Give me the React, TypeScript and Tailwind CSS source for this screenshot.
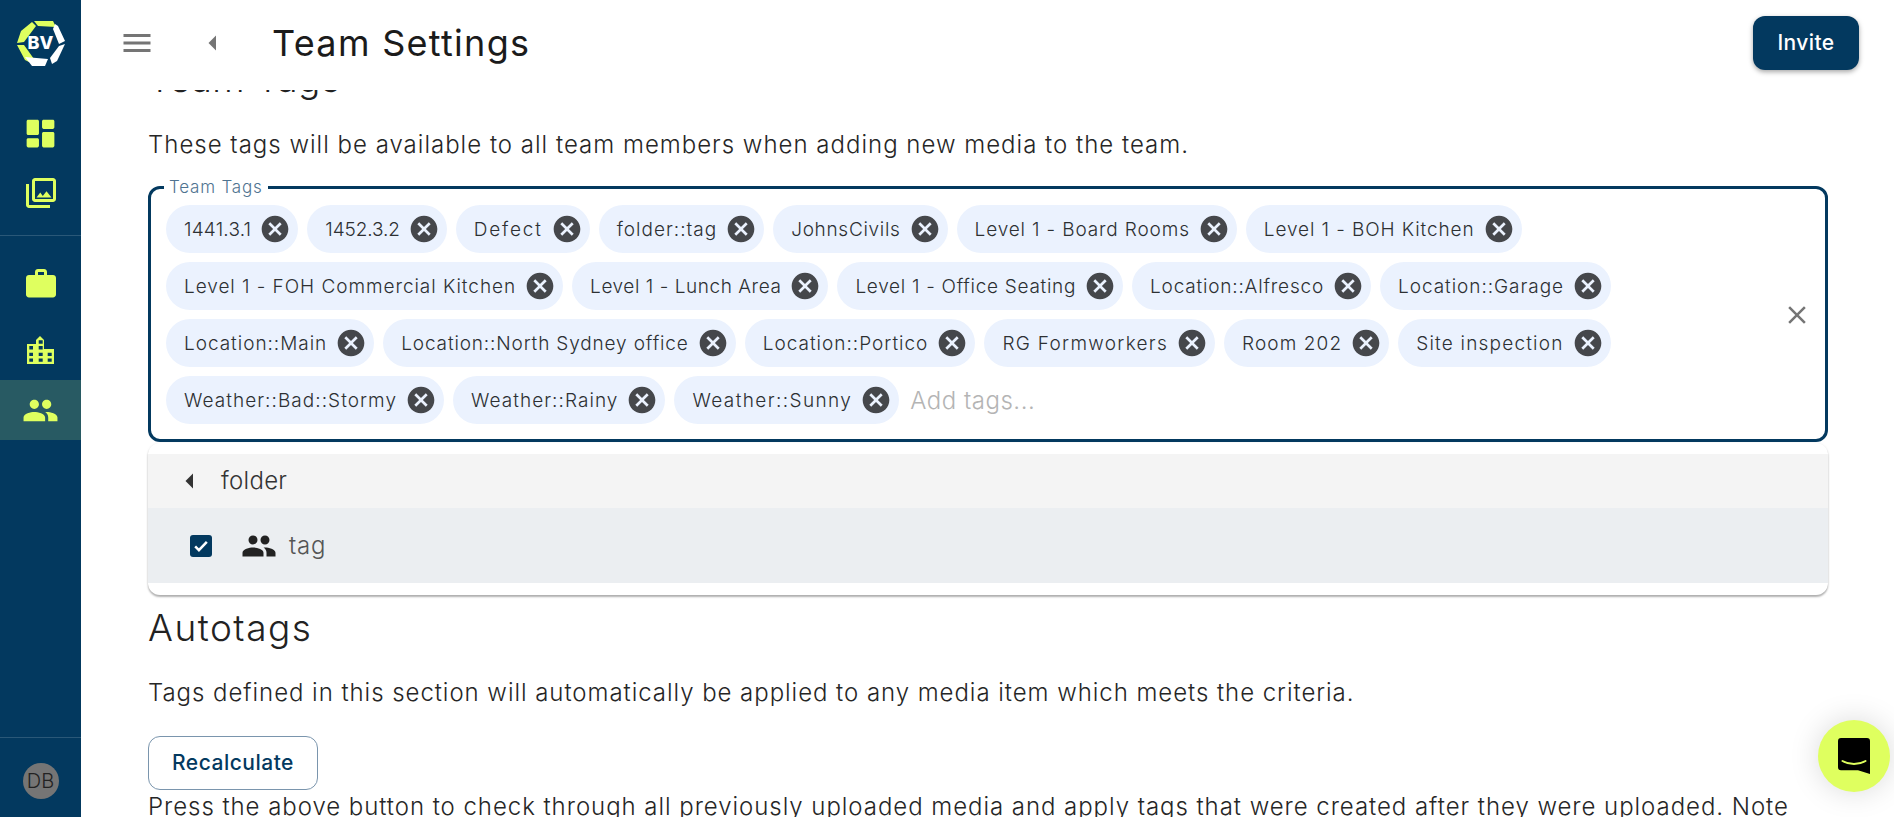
import { ReactNode } from 'react';

const mont = '[font-family:Inter,"Noto_Sans",sans-serif]';

// label + letter spacing per chip, so chip widths line up with the wider original typeface
const tagRows: [string, string][][] = [
  [
    ['1441.3.1', 'tracking-[0.2px]'],
    ['1452.3.2', 'tracking-[-0.1px]'],
    ['Defect', 'tracking-[1.8px]'],
    ['folder::tag', 'tracking-[1px]'],
    ['JohnsCivils', 'tracking-[0.7px]'],
    ['Level 1 - Board Rooms', 'tracking-[0.85px]'],
    ['Level 1 - BOH Kitchen', 'tracking-[0.9px]'],
  ],
  [
    ['Level 1 - FOH Commercial Kitchen', 'tracking-[0.95px]'],
    ['Level 1 - Lunch Area', 'tracking-[0.55px]'],
    ['Level 1 - Office Seating', 'tracking-[0.7px]'],
    ['Location::Alfresco', 'tracking-[0.8px]'],
    ['Location::Garage', 'tracking-[0.95px]'],
  ],
  [
    ['Location::Main', 'tracking-[0.97px]'],
    ['Location::North Sydney office', 'tracking-[0.85px]'],
    ['Location::Portico', 'tracking-[1px]'],
    ['RG Formworkers', 'tracking-[1.3px]'],
    ['Room 202', 'tracking-[1.1px]'],
    ['Site inspection', 'tracking-[1.2px]'],
  ],
  [
    ['Weather::Bad::Stormy', 'tracking-[1.05px]'],
    ['Weather::Rainy', 'tracking-[1.05px]'],
    ['Weather::Sunny', 'tracking-[1.4px]'],
  ],
];

function Icon({ d, className }: { d: string; className?: string }) {
  return (
    <svg viewBox="0 0 24 24" fill="currentColor" className={`shrink-0 ${className ?? ''}`}>
      <path d={d} />
    </svg>
  );
}

const PEOPLE =
  'M16 11c1.66 0 2.99-1.34 2.99-3S17.66 5 16 5c-1.66 0-3 1.34-3 3s1.34 3 3 3zm-8 0c1.66 0 2.99-1.34 2.99-3S9.66 5 8 5C6.34 5 5 6.34 5 8s1.34 3 3 3zm0 2c-2.33 0-7 1.17-7 3.5V19h14v-2.5c0-2.33-4.67-3.5-7-3.5zm8 0c-.29 0-.62.02-.97.05 1.16.84 1.97 1.97 1.97 3.45V19h6v-2.5c0-2.33-4.67-3.5-7-3.5z';
const CANCEL =
  'M12 2C6.47 2 2 6.47 2 12s4.47 10 10 10 10-4.47 10-10S17.53 2 12 2zm5 13.59L15.59 17 12 13.41 8.41 17 7 15.59 10.59 12 7 8.41 8.41 7 12 10.59 15.59 7 17 8.41 13.41 12 17 15.59z';
const ARROW_LEFT = 'M14 7l-5 5 5 5V7z';

function NavItem({ children, active }: { children: ReactNode; active?: boolean }) {
  return (
    <div className={`flex h-[60px] items-center justify-center text-[#dfff5f] ${active ? 'bg-[#285a63]' : ''}`}>
      {children}
    </div>
  );
}

function Logo() {
  return (
    <div className="relative flex h-[46px] w-[48px] items-center justify-center">
      <svg viewBox="0 0 48 46" className="absolute inset-0 h-full w-full">
        <path d="M17 1 L36 1 L39 7 L21 6 Z" fill="#dfff5f" />
        <path d="M15 2 L19 6 L7 22 L0 23 L4 11 Z" fill="#dfff5f" />
        <path d="M0 25 L7 25 L17 39 L12 42 L8 40 Z" fill="#dfff5f" />
        <path d="M38 4 L41 6 L48 21 L42 24 L36 9 Z" fill="#ffffff" />
        <path d="M48 24 L40 41 L35 44 L33 38 L42 26 Z" fill="#ffffff" />
        <path d="M8 37 L31 39 L28 46 L15 46 Z" fill="#ffffff" />
      </svg>
      <span className={`${mont} relative text-[18px] font-extrabold leading-none text-white`}>BV</span>
    </div>
  );
}

function Sidebar() {
  return (
    <aside className="flex h-full w-[81px] shrink-0 flex-col bg-[#03395f]">
      <div className="flex h-[86px] items-center justify-center">
        <Logo />
      </div>
      <div className="flex h-[150px] flex-col border-b border-[#2a5878] pt-[17px]">
        <div className="flex h-[60px] items-center justify-center text-[#dfff5f]">
          <Icon className="h-[37px] w-[37px]" d="M4 13h6c.55 0 1-.45 1-1V4c0-.55-.45-1-1-1H4c-.55 0-1 .45-1 1v8c0 .55.45 1 1 1zm0 8h6c.55 0 1-.45 1-1v-4c0-.55-.45-1-1-1H4c-.55 0-1 .45-1 1v4c0 .55.45 1 1 1zm10 0h6c.55 0 1-.45 1-1v-8c0-.55-.45-1-1-1h-6c-.55 0-1 .45-1 1v8c0 .55.45 1 1 1zM13 4v4c0 .55.45 1 1 1h6c.55 0 1-.45 1-1V4c0-.55-.45-1-1-1h-6c-.55 0-1 .45-1 1z" />
        </div>
        <div className="flex h-[60px] items-center justify-center text-[#dfff5f]">
          <Icon className="h-[36px] w-[36px]" d="M20 4v12H8V4h12m0-2H8c-1.1 0-2 .9-2 2v12c0 1.1.9 2 2 2h12c1.1 0 2-.9 2-2V4c0-1.1-.9-2-2-2zm-8.5 9.67l1.69 2.26 2.48-3.1L19 15H9zM2 6v14c0 1.1.9 2 2 2h14v-2H4V6H2z" />
        </div>
      </div>
      <div className="mt-[18px] flex flex-col">
        <div className="mb-[6px]">
          <NavItem>
            <Icon className="h-[36px] w-[36px]" d="M20 6h-4V4c0-1.11-.89-2-2-2h-4c-1.11 0-2 .89-2 2v2H4c-1.11 0-1.99.89-1.99 2L2 19c0 1.11.89 2 2 2h16c1.11 0 2-.89 2-2V8c0-1.11-.89-2-2-2zm-6 0h-4V4h4v2z" />
          </NavItem>
        </div>
        <NavItem>
          <svg viewBox="0 0 28 28" fill="currentColor" className="h-[28px] w-[28px]">
            <path
              fillRule="evenodd"
              d="M0 8h9V4l4-4 4 4v9h10v15H0zM2.3 10v3.4H6V10zM2.3 16.7V20H6v-3.3zM2.3 22.4v3.3H6v-3.3zM11.7 4.3v3.4h4V4.3zM11.7 10v3.4h4V10zM11.7 16.7V20h4v-3.3zM11.7 22.4v3.3h4v-3.3zM20.7 16.7V20h4v-3.3zM20.7 22.4v3.3h4v-3.3z"
            />
          </svg>
        </NavItem>
        <NavItem active>
          <Icon className="h-[37px] w-[37px]" d={PEOPLE} />
        </NavItem>
      </div>
      <div className="mt-auto flex h-[80px] items-center justify-center border-t border-[#2a5878] pt-[6px]">
        <div className={`${mont} flex h-[36px] w-[36px] items-center justify-center rounded-full bg-[#757575] text-[20px] font-light text-[#222]`}>
          DB
        </div>
      </div>
    </aside>
  );
}

function Chip({ label, spacing }: { label: string; spacing: string }) {
  return (
    <span className="flex h-[48px] items-center rounded-full bg-[#ebf2fe] pl-[18px] pr-[7px]">
      <span className={`whitespace-nowrap pt-[2px] text-[19px] font-[350] text-[#2d3033] ${spacing}`}>{label}</span>
      <Icon className="ml-[8px] h-[32px] w-[32px] text-[#45474b]" d={CANCEL} />
    </span>
  );
}

function TagField() {
  return (
    <div className="relative flex h-[256px] items-start rounded-[12px] border-[3px] border-[#03395f] pl-[15px] pr-[13px] pt-[16px]">
      <span className="absolute left-[13px] top-[-12px] bg-white px-[5px] text-[17px] leading-[20px] font-[350] tracking-[0.8px] text-[#4f7390]">
        Team Tags
      </span>
      <div className="flex flex-1 flex-col gap-[9px]">
        {tagRows.map((row, i) => (
          <div key={i} className="flex gap-[9px]">
            {row.map(([label, spacing]) => (
              <Chip key={label} label={label} spacing={spacing} />
            ))}
            {i === 3 && (
              <span className="ml-[2px] flex items-center pt-[1px] text-[24px] font-[350] tracking-[0.5px] text-[#b4b4b4]">Add tags...</span>
            )}
          </div>
        ))}
      </div>
      <div className="flex h-[219px] items-center">
        <Icon className="h-[30px] w-[30px] text-[#757575]" d="M19 6.41 17.59 5 12 10.59 6.41 5 5 6.41 10.59 12 5 17.59 6.41 19 12 13.41 17.59 19 19 17.59 13.41 12z" />
      </div>
    </div>
  );
}

function Dropdown() {
  return (
    <div className="mt-[1px] h-[152px] rounded-[12px] bg-white pt-[11px] shadow-[0_2px_2px_rgba(0,0,0,0.3),0_0_3px_rgba(0,0,0,0.06)]">
      <div className="flex h-[54px] items-center bg-[#f4f4f4] pl-[24px] text-[#333]">
        <Icon className="h-[36px] w-[36px]" d={ARROW_LEFT} />
        <span className="ml-[13px] text-[24px] font-[350] tracking-[0.3px]">folder</span>
      </div>
      <div className="flex h-[75px] items-center bg-[#ebeef1] pl-[42px] text-[#333]">
        <span className="flex h-[22px] w-[22px] shrink-0 items-center justify-center rounded-[3px] bg-[#03395f]">
          <svg viewBox="0 0 24 24" className="h-[20px] w-[20px]" fill="none" stroke="#fff" strokeWidth="3">
            <path d="M5 12.5l4.5 4.5L19 7" />
          </svg>
        </span>
        <Icon className="ml-[29px] h-[36px] w-[36px] text-[#222]" d={PEOPLE} />
        <span className="ml-[12px] text-[24px] font-[350] tracking-[0.8px] text-[#555]">tag</span>
      </div>
    </div>
  );
}

export default function App() {
  return (
    <div className={`${mont} flex h-[817px] w-[1894px] overflow-hidden bg-white`}>
      <Sidebar />
      <div className="relative flex min-w-0 flex-1 flex-col">
        <header className="z-10 flex h-[90px] shrink-0 items-start bg-white">
          <div className="flex h-[86px] w-full items-center pl-[38px] pr-[35px]">
            <Icon className="h-[36px] w-[36px] text-[#757575]" d="M3 18h18v-2H3v2zm0-5h18v-2H3v2zm0-7v2h18V6H3z" />
            <Icon className="ml-[40px] h-[36px] w-[36px] text-[#757575]" d={ARROW_LEFT} />
            <h1 className="ml-[41px] text-[36px] font-normal tracking-[1.3px] text-[#1b1b1b]">Team Settings</h1>
            <button className="ml-auto h-[54px] w-[106px] rounded-[12px] bg-[#03395f] text-[21px] font-medium tracking-[0.4px] text-white shadow-[0_2px_5px_rgba(0,0,0,0.35)]">
              Invite
            </button>
          </div>
        </header>
        <main className="mt-[-33px] flex flex-col pl-[67px] pr-[66px]">
          <h2 className="text-[37px] leading-[44px] font-light tracking-[0.5px] text-[#222]">Team Tags</h2>
          <p className="mt-[29px] text-[24px] leading-[30px] font-[350] tracking-[1px] whitespace-nowrap text-[#262626]">
            These tags will be available to all team members when adding new media to the team.
          </p>
          <div className="mt-[26px]">
            <TagField />
            <Dropdown />
          </div>
          <h2 className="mt-[11px] text-[37px] leading-[44px] font-light tracking-[1.5px] text-[#222]">Autotags</h2>
          <p className="mt-[28px] text-[24px] leading-[30px] font-[350] tracking-[0.95px] whitespace-nowrap text-[#262626]">
            Tags defined in this section will automatically be applied to any media item which meets the criteria.
          </p>
          <button className="mt-[28px] h-[54px] w-[170px] rounded-[12px] border border-[#7a95ad] text-[21px] font-medium tracking-[0.5px] text-[#03395f]">
            Recalculate
          </button>
          <p className="mt-[2px] text-[24px] leading-[30px] font-[350] tracking-[0.95px] whitespace-nowrap text-[#262626]">
            Press the above button to check through all previously uploaded media and apply tags that were created after they were uploaded. Note
          </p>
        </main>
        <div className="absolute right-[4px] bottom-[25px] z-20 flex h-[72px] w-[72px] items-center justify-center rounded-full bg-[#dfff5f] shadow-[0_0_30px_rgba(0,0,0,0.15)]">
          <svg viewBox="0 0 32 36" className="h-[36px] w-[32px]">
            <path d="M3 0h26a3 3 0 0 1 3 3v33l-12-3.7H3a3 3 0 0 1-3-3V3a3 3 0 0 1 3-3z" fill="#000" />
            <path d="M4.5 23c7 4 16 4 23 0" fill="none" stroke="#dfff5f" strokeWidth="2" strokeLinecap="round" />
          </svg>
        </div>
      </div>
    </div>
  );
}
